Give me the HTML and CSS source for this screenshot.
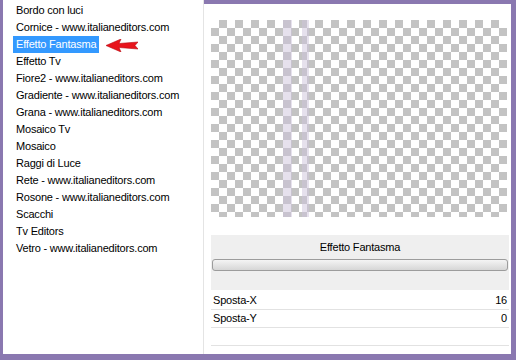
FILE: index.html
```html
<!DOCTYPE html>
<html lang="it">
  <head>
    <meta charset="UTF-8" />
    <title>Effetto Fantasma</title>
    <link rel="stylesheet" href="styles.css">
  </head>
  <body>
    <div class="frame">
      <div class="list">
        <div class="list__item">Bordo con luci</div>
        <div class="list__item">Cornice - www.italianeditors.com</div>
        <div class="list__item list__item--active"><span>Effetto Fantasma</span>
          <svg class="arrow" width="32" height="13" viewBox="0 0 32 13">
            <polygon points="0,6.5 15,0 13,4.5 32,3 29,6.5 32,10 13,8.5 15,13" fill="#e8141c" stroke="#b80c12" stroke-width="0.6"/>
          </svg>
        </div>
        <div class="list__item">Effetto Tv</div>
        <div class="list__item">Fiore2 - www.italianeditors.com</div>
        <div class="list__item">Gradiente - www.italianeditors.com</div>
        <div class="list__item">Grana - www.italianeditors.com</div>
        <div class="list__item">Mosaico Tv</div>
        <div class="list__item">Mosaico</div>
        <div class="list__item">Raggi di Luce</div>
        <div class="list__item">Rete - www.italianeditors.com</div>
        <div class="list__item">Rosone - www.italianeditors.com</div>
        <div class="list__item">Scacchi</div>
        <div class="list__item">Tv Editors</div>
        <div class="list__item">Vetro - www.italianeditors.com</div>
      </div>

      <div class="panel">
        <div class="preview">
          <div class="stripe stripe--one"></div>
          <div class="stripe stripe--two"></div>
        </div>

        <div class="effect">
          <div class="effect__title">Effetto Fantasma</div>
          <div class="effect__bar"></div>
        </div>

        <div class="params">
          <div class="param">
            <span>Sposta-X</span>
            <span>16</span>
          </div>
          <div class="param">
            <span>Sposta-Y</span>
            <span>0</span>
          </div>
          <div class="param"></div>
        </div>
      </div>
    </div>
  </body>
</html>
```

FILE: styles.css
```css
body {
  margin: 0;
  font-family: "Liberation Sans", Arial, sans-serif;
  font-size: 11px;
  letter-spacing: -0.2px;
  color: #000;
}
.frame {
  display: flex;
  width: 516px;
  height: 360px;
  box-sizing: border-box;
  background: #fff;
  border-left: 3px solid #8a78b0;
  border-right: 5px solid #8a78b0;
  border-bottom: 6px solid #8a78b0;
}

/* effect list on the left */
.list {
  width: 200px;
  padding-top: 2px;
  border-right: 1px solid #e4e4e4;
}
.list__item {
  position: relative;
  height: 17px;
  line-height: 17px;
  padding-left: 13px;
  white-space: nowrap;
}
.list__item--active {
  padding-left: 10px;
}
.list__item--active span {
  display: inline-block;
  padding: 0 3px;
  background: #3399ff;
  color: #fff;
}
.arrow {
  position: absolute;
  left: 103px;
  top: 3px;
}

/* preview + settings */
.panel {
  flex: 1;
  border-top: 4px solid #8a78b0;
  padding: 16px 2px 0 7px;
}
.preview {
  position: relative;
  width: 296px;
  height: 197px;
  background-color: #fff;
  background-image:
    linear-gradient(45deg, #c3c3c3 25%, transparent 25%, transparent 75%, #c3c3c3 75%),
    linear-gradient(45deg, #c3c3c3 25%, transparent 25%, transparent 75%, #c3c3c3 75%);
  background-size: 16px 16px;
  background-position: 0 0, 8px 8px;
}
.stripe {
  position: absolute;
  top: 0;
  bottom: 0;
  background: rgba(205, 195, 220, 0.5);
}
.stripe--one {
  left: 72px;
  width: 9px;
}
.stripe--two {
  left: 91px;
  width: 7px;
}

.effect {
  margin-top: 18px;
  width: 298px;
  height: 55px;
  background: #efefef;
  padding-top: 2px;
  box-sizing: border-box;
}
.effect__title {
  height: 20px;
  line-height: 20px;
  text-align: center;
}
.effect__bar {
  height: 10px;
  margin: 2px 1px 0;
  border: 1px solid #9c9c9c;
  border-radius: 3px;
  background: linear-gradient(#f4f4f4, #d6d6d6);
}

.params {
  width: 298px;
  padding-top: 2px;
}
.param {
  display: flex;
  justify-content: space-between;
  height: 17px;
  line-height: 17px;
  padding: 0 2px;
  border-bottom: 1px solid #e2e2e2;
}
```
